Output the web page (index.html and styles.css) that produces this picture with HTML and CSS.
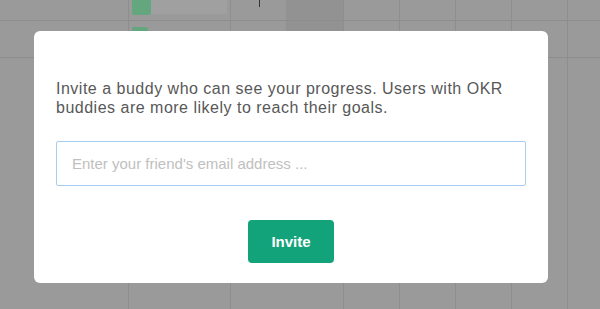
FILE: index.html
```html
<!DOCTYPE html>
<html>
<head>
<meta charset="utf-8">
<link rel="stylesheet" href="styles.css">
</head>
<body>
<div class="app">
  <div class="row r1">
    <div class="cell c1"></div>
    <div class="cell c2"><span class="sq"></span><span class="bar"></span></div>
    <div class="cell c3"><span class="caret"></span></div>
    <div class="cell c4 dark"></div>
    <div class="cell c5"></div>
    <div class="cell c5"></div>
    <div class="cell c5"></div>
    <div class="cell c5"></div>
    <div class="cell c6"></div>
  </div>
  <div class="row r2">
    <div class="cell c1"></div>
    <div class="cell c2"><span class="sq small"></span></div>
    <div class="cell c3"></div>
    <div class="cell c4 dark"></div>
    <div class="cell c5"></div>
    <div class="cell c5"></div>
    <div class="cell c5"></div>
    <div class="cell c5"></div>
    <div class="cell c6"></div>
  </div>
  <div class="row r3">
    <div class="cell c1"></div>
    <div class="cell c2"></div>
    <div class="cell c3"></div>
    <div class="cell c4"></div>
    <div class="cell c5"></div>
    <div class="cell c5"></div>
    <div class="cell c5"></div>
    <div class="cell c5"></div>
    <div class="cell c6"></div>
  </div>

  <div class="modal">
    <p class="lead">Invite a buddy who can see your progress. Users with OKR buddies are more likely to reach their goals.</p>
    <input class="email" type="text" placeholder="Enter your friend's email address ...">
    <div class="actions">
      <button class="invite">Invite</button>
    </div>
  </div>
</div>
</body>
</html>
```

FILE: styles.css
```css
* { box-sizing: border-box; }
html, body { margin: 0; padding: 0; }
body {
  width: 600px;
  height: 309px;
  overflow: hidden;
  background: #9a9a9a;
  font-family: "Liberation Sans", Arial, sans-serif;
}
.app {
  position: relative;
  width: 600px;
  height: 309px;
  background: #9a9a9a;
}
.row {
  display: flex;
  border-bottom: 1px solid #8d8d8d;
}
.r1 { height: 21px; }
.r2 { height: 37px; }
.r3 { height: 251px; border-bottom: none; }
.cell {
  position: relative;
  border-right: 1px solid #8e8e8e;
  height: 100%;
}
.c1 { width: 129px; }
.c2 { width: 102px; }
.c3 { width: 55px; border-right: none; }
.c4 { width: 58px; }
.c5 { width: 56px; }
.c6 { flex: 1; border-right: none; }
.dark { background: #929292; }
.sq {
  position: absolute;
  left: 3px;
  top: 0;
  width: 19px;
  height: 15px;
  background: #64a67e;
  border-radius: 0 0 2px 2px;
}
.sq.small {
  top: 6px;
  width: 16px;
  height: 10px;
  border-radius: 2px;
}
.bar {
  position: absolute;
  left: 22px;
  top: 0;
  width: 76px;
  height: 14px;
  background: #a0a0a0;
}
.caret {
  position: absolute;
  left: 28px;
  top: 0;
  width: 1px;
  height: 7px;
  background: #333;
}
.modal {
  position: absolute;
  left: 34px;
  top: 31px;
  width: 514px;
  height: 252px;
  background: #fff;
  border-radius: 6px;
  padding: 49px 22px 20px 22px;
  display: flex;
  flex-direction: column;
}
.lead {
  margin: 0;
  font-size: 16px;
  letter-spacing: 0.5px;
  line-height: 18.5px;
  color: #585858;
}
.email {
  display: block;
  width: 100%;
  height: 45px;
  margin-top: 24px;
  border: 1px solid #a9cdf2;
  border-radius: 2px;
  padding: 0 15px;
  font-family: "Liberation Sans", Arial, sans-serif;
  font-size: 15px;
  color: #555;
  outline: none;
}
.email::placeholder { color: #c0c0c0; }
.actions {
  display: flex;
  justify-content: center;
  margin-top: 34px;
}
.invite {
  width: 86px;
  height: 43px;
  border: none;
  border-radius: 4px;
  background: #12a37b;
  color: #fff;
  font-family: "Liberation Sans", Arial, sans-serif;
  font-weight: bold;
  font-size: 15px;
  padding: 0;
}
```
